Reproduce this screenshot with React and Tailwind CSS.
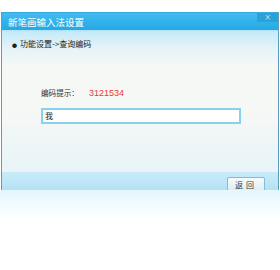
export default function App() {
  return (
    <div
      className="w-[280px] h-[270px] bg-white overflow-hidden flex flex-col"
      style={{ fontFamily: '"Noto Sans CJK SC", "Liberation Sans", sans-serif' }}
    >
      <div className="h-[12px] shrink-0" />
      <div className="ml-[1px] w-[278px] border-x border-[#5d9fb8] flex flex-col shrink-0">
        {/* title bar */}
        <div className="h-[18px] bg-[linear-gradient(to_bottom,#41bdf0,#25a8e4)] border-t border-[#3aa9dc] flex items-start justify-between">
          <span className="pl-[6px] pt-[2.5px] text-[9.5px] leading-[13px] text-white">新笔画输入法设置</span>
          <div className="w-[21px] h-[9px] bg-[#27a2da] flex items-center justify-center text-[8px] leading-none text-[#c9dbe5]" style={{ fontFamily: '"DejaVu Sans", sans-serif' }}>
            ×
          </div>
        </div>
        {/* content */}
        <div className="h-[142px] bg-[linear-gradient(to_bottom,#aee0f4_0px,#c6eaf8_2px,#e4f3f8_18px,#f6f8f5_36px,#f7f8f5_80px,#eef6f7_110px,#e8f4f8_142px)] flex flex-col">
          <div className="flex items-center h-[10px] mt-[9px] pl-[10px] text-[8px] leading-none text-[#222]">
            <span className="text-[5px] mr-[3px]">●</span>
            <span>功能设置-&gt;查询编码</span>
          </div>
          <div className="flex items-center mt-[38px] pl-[39px] h-[12px]">
            <span className="text-[7.6px] leading-none text-[#333] w-[48px]">编码提示：</span>
            <span className="text-[9px] leading-none text-[#e33b3b]" style={{ fontFamily: '"Liberation Sans", sans-serif' }}>3121534</span>
          </div>
          <div className="ml-[39px] mt-[9px] w-[200px] h-[16px] border-2 border-[#86d2ea] bg-white flex items-center pl-[2px]">
            <span className="text-[8px] leading-none text-[#222]">我</span>
          </div>
        </div>
        {/* bottom strip */}
        <div className="h-[18px] bg-[linear-gradient(to_bottom,#c8ebf8,#b6e2f5)] overflow-hidden flex justify-end pr-[13px]">
          <div className="mt-[5px] w-[38px] h-[18px] rounded-[2px] border border-[#80bdd6] bg-[linear-gradient(to_bottom,#f6fbfd,#d7e9f1)] flex justify-center pt-[2px]">
            <span className="text-[8px] leading-[10px] text-[#3a3a3a] tracking-[3px]">返回</span>
          </div>
        </div>
      </div>
      <div className="h-[30px] shrink-0 bg-[linear-gradient(to_bottom,#e3f7fd,#ffffff)]" />
    </div>
  );
}
